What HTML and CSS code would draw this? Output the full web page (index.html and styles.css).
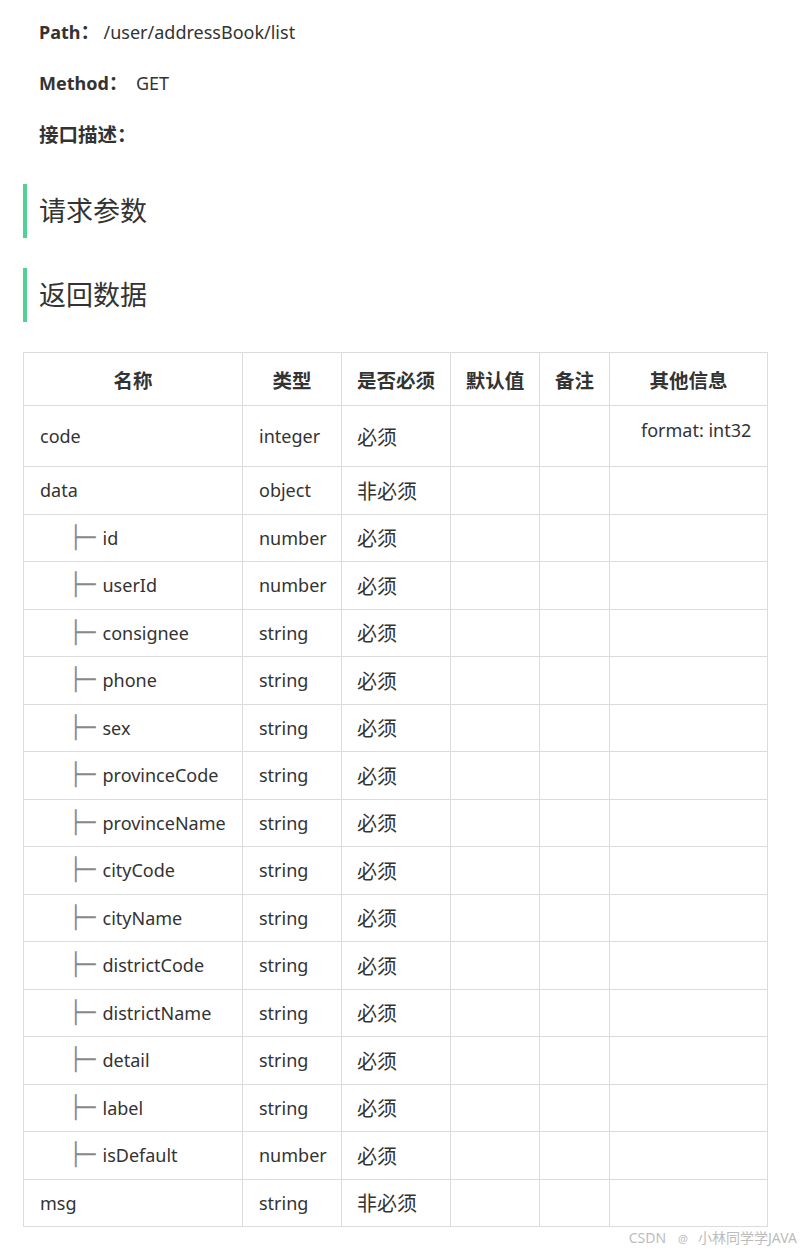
FILE: index.html
```html
<!DOCTYPE html>
<html lang="zh">
<head>
<meta charset="utf-8">
<link rel="stylesheet" href="styles.css">
</head>
<body>
<div class="page">
  <p class="meta"><b>Path<span class="zh">：</span></b>/user/addressBook/list</p>
  <p class="meta"><b class="wide">Method<span class="zh">：</span></b>GET</p>
  <p class="meta"><b class="zh">接口描述：</b></p>
  <h2 class="sec">请求参数</h2>
  <h2 class="sec">返回数据</h2>
  <table class="tbl">
    <colgroup>
      <col class="c1"><col class="c2"><col class="c3"><col class="c4"><col class="c5"><col class="c6">
    </colgroup>
    <thead>
      <tr><th>名称</th><th>类型</th><th>是否必须</th><th>默认值</th><th>备注</th><th>其他信息</th></tr>
    </thead>
    <tbody>
      <tr class="tall"><td>code</td><td>integer</td><td class="zh">必须</td><td></td><td></td><td class="info"><div class="fmt">format: int32</div></td></tr>
      <tr><td>data</td><td>object</td><td class="zh">非必须</td><td></td><td></td><td></td></tr>
      <tr><td class="child"><span class="tree">├─</span>id</td><td>number</td><td class="zh">必须</td><td></td><td></td><td></td></tr>
      <tr><td class="child"><span class="tree">├─</span>userId</td><td>number</td><td class="zh">必须</td><td></td><td></td><td></td></tr>
      <tr><td class="child"><span class="tree">├─</span>consignee</td><td>string</td><td class="zh">必须</td><td></td><td></td><td></td></tr>
      <tr><td class="child"><span class="tree">├─</span>phone</td><td>string</td><td class="zh">必须</td><td></td><td></td><td></td></tr>
      <tr><td class="child"><span class="tree">├─</span>sex</td><td>string</td><td class="zh">必须</td><td></td><td></td><td></td></tr>
      <tr><td class="child"><span class="tree">├─</span>provinceCode</td><td>string</td><td class="zh">必须</td><td></td><td></td><td></td></tr>
      <tr><td class="child"><span class="tree">├─</span>provinceName</td><td>string</td><td class="zh">必须</td><td></td><td></td><td></td></tr>
      <tr><td class="child"><span class="tree">├─</span>cityCode</td><td>string</td><td class="zh">必须</td><td></td><td></td><td></td></tr>
      <tr><td class="child"><span class="tree">├─</span>cityName</td><td>string</td><td class="zh">必须</td><td></td><td></td><td></td></tr>
      <tr><td class="child"><span class="tree">├─</span>districtCode</td><td>string</td><td class="zh">必须</td><td></td><td></td><td></td></tr>
      <tr><td class="child"><span class="tree">├─</span>districtName</td><td>string</td><td class="zh">必须</td><td></td><td></td><td></td></tr>
      <tr><td class="child"><span class="tree">├─</span>detail</td><td>string</td><td class="zh">必须</td><td></td><td></td><td></td></tr>
      <tr><td class="child"><span class="tree">├─</span>label</td><td>string</td><td class="zh">必须</td><td></td><td></td><td></td></tr>
      <tr><td class="child"><span class="tree">├─</span>isDefault</td><td>number</td><td class="zh">必须</td><td></td><td></td><td></td></tr>
      <tr><td>msg</td><td>string</td><td class="zh">非必须</td><td></td><td></td><td></td></tr>
    </tbody>
  </table>
  <div class="wm">CSDN<span class="at">@</span>小林同学学JAVA</div>
</div>
</body>
</html>
```

FILE: styles.css
```css
html, body {
  margin: 0;
  padding: 0;
  background: #fff;
}
body {
  font-family: "Noto Sans", "Noto Sans CJK SC", sans-serif;
  color: #333;
  font-size: 18px;
}
.page {
  padding: 16px 0 0 23px;
  width: 744px;
}
.zh {
  font-size: 20px;
}
.meta {
  margin: 0 0 18px 16px;
  line-height: 33px;
  height: 33px;
}
.meta b {
  font-weight: 700;
  margin-right: 4px;
}
.meta b.wide {
  margin-right: 8px;
}
.meta b .zh {
  font-size: 19px;
}
.meta b.zh {
  font-size: 19.5px;
}
.sec {
  margin: 33px 0 0 0;
  height: 54px;
  line-height: 54px;
  border-left: 4px solid #52d195;
  padding-left: 12px;
  font-size: 27px;
  font-weight: 400;
  color: #333;
}
.sec + .sec {
  margin-top: 30px;
}
.tbl {
  margin-top: 30px;
  width: 744px;
  border-collapse: collapse;
  table-layout: fixed;
}
.c1 { width: 219px; }
.c2 { width: 99px; }
.c3 { width: 109px; }
.c4 { width: 89px; }
.c5 { width: 70px; }
.c6 { width: 158px; }
.tbl th, .tbl td {
  border: 1px solid #dcdcdc;
  padding: 0 0 0 16px;
  text-align: left;
  vertical-align: middle;
  white-space: nowrap;
  overflow: hidden;
}
.tbl th {
  height: 52px;
  text-align: center;
  padding: 0;
  font-weight: 700;
  font-size: 19.5px;
}
.tbl td {
  height: 46.5px;
}
.tbl td.zh {
  font-size: 20px;
  padding-left: 15px;
}
.tbl tr.tall td {
  height: 60px;
}
.tbl td.child {
  padding-left: 45px;
}
.tree {
  font-family: "DejaVu Sans", sans-serif;
  font-size: 22px;
  color: #888;
  margin-right: 7px;
  line-height: 1;
}
.tbl td.info {
  padding-left: 31px;
  vertical-align: top;
}
.fmt {
  padding-top: 12px;
}
.wm {
  text-align: right;
  font-size: 14px;
  color: #bcbcbc;
  line-height: 22px;
  margin-right: -30px;
}
.at {
  font-size: 11px;
  margin: 0 10px 0 12px;
}
```
